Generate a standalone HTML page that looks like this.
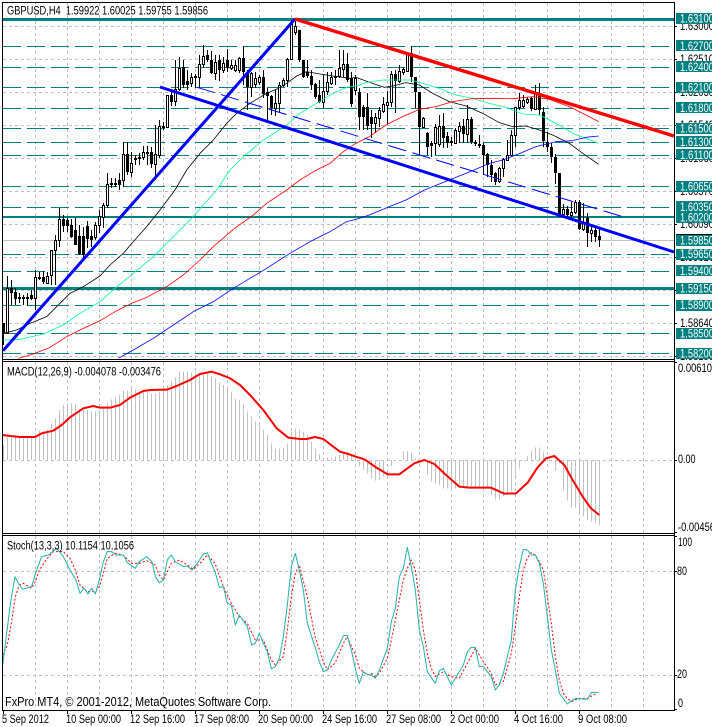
<!DOCTYPE html>
<html><head><meta charset="utf-8"><title>GBPUSD,H4</title>
<style>
html,body{margin:0;padding:0;background:#fff;width:712px;height:727px;overflow:hidden}
svg{display:block;position:absolute;left:0;top:0}
text{font-family:"Liberation Sans",sans-serif;font-size:11.5px;fill:#000}
.w{fill:#fff}
.ns *{vector-effect:non-scaling-stroke;fill:none}
</style></head><body>
<svg width="712" height="727" viewBox="0 0 712 727" xmlns="http://www.w3.org/2000/svg">
<rect width="712" height="727" fill="#fff"/>
<!-- vertical grid -->
<g stroke="#c0c0c0" stroke-dasharray="3 3" shape-rendering="crispEdges" fill="none">
<path d="M35.5 3V359M67.5 3V359M99.5 3V359M131.5 3V359M163.5 3V359M195.5 3V359M227.5 3V359M259.5 3V359M291.5 3V359M323.5 3V359M355.5 3V359M387.5 3V359M419.5 3V359M451.5 3V359M483.5 3V359M515.5 3V359M547.5 3V359M579.5 3V359M611.5 3V359M643.5 3V359"/>
<path d="M35.5 362V533M67.5 362V533M99.5 362V533M131.5 362V533M163.5 362V533M195.5 362V533M227.5 362V533M259.5 362V533M291.5 362V533M323.5 362V533M355.5 362V533M387.5 362V533M419.5 362V533M451.5 362V533M483.5 362V533M515.5 362V533M547.5 362V533M579.5 362V533M611.5 362V533M643.5 362V533"/>
<path d="M35.5 536V710M67.5 536V710M99.5 536V710M131.5 536V710M163.5 536V710M195.5 536V710M227.5 536V710M259.5 536V710M291.5 536V710M323.5 536V710M355.5 536V710M387.5 536V710M419.5 536V710M451.5 536V710M483.5 536V710M515.5 536V710M547.5 536V710M579.5 536V710M611.5 536V710M643.5 536V710"/>
<path d="M3 26.5H674M3 59.5H674M3 92.5H674M3 125.5H674M3 158.5H674M3 191.5H674M3 224.5H674M3 257.5H674M3 290.5H674M3 323.5H674M3 356.5H674M3 460.5H674M3 571.5H674M3 675.5H674"/>
</g>
<!-- levels -->
<g stroke="#008080" fill="none" shape-rendering="crispEdges">
<path stroke-dasharray="18 6" d="M3 46.5H674M3 67.5H674M3 87.5H674M3 108.5H674M3 128.5H674M3 142.5H674M3 155.5H674M3 186.5H674M3 207.5H674M3 254.5H674M3 271.5H674M3 305.5H674M3 333.5H674M3 353.5H674"/>
<path stroke-width="3" d="M3 19.5H674M3 288.5H674"/>
<path stroke-width="2" d="M3 217H674"/>
</g>
<path d="M3 240.5H674" stroke="#c0c0c0" shape-rendering="crispEdges"/>
<!-- candle wicks -->
<path stroke="#000" fill="none" shape-rendering="crispEdges" d="M3.5 323V345M7.5 276V333M11.5 280V305M15.5 288V305M19.5 293V303M23.5 295V305M27.5 293V306M31.5 290V300M35.5 270V310M39.5 272V280M43.5 271V284M47.5 272V284M51.5 250V285M55.5 235V285M59.5 208V247M63.5 215V232M67.5 218V232M71.5 219V238M75.5 218V245M79.5 225V255M83.5 227V258M87.5 221V248M91.5 230V247M95.5 222V240M99.5 210V233M103.5 203V228M107.5 173V208M111.5 178V188M115.5 178V187M119.5 173V190M123.5 142V187M127.5 142V175M131.5 152V177M135.5 155V165M139.5 153V165M143.5 146V160M147.5 146V165M151.5 147V168M155.5 125V180M159.5 120V158M163.5 122V130M167.5 95V128M171.5 92V106M175.5 60V106M179.5 57V91M183.5 60V88M187.5 70V90M191.5 73V87M195.5 74V88M199.5 55V88M203.5 45V68M207.5 50V62M211.5 51V74M215.5 55V80M219.5 55V81M223.5 57V73M227.5 49V72M231.5 60V70M235.5 60V72M239.5 57V73M243.5 46V85M247.5 70V110M251.5 72V97M255.5 72V88M259.5 75V85M263.5 70V98M267.5 88V120M271.5 95V115M275.5 90V116M279.5 82V113M283.5 78V87M287.5 58V87M291.5 20V60M295.5 20V35M299.5 30V62M303.5 60V78M307.5 60V78M311.5 70V90M315.5 83V99M319.5 80V103M323.5 75V108M327.5 72V95M331.5 72V85M335.5 70V85M339.5 50V78M343.5 50V77M347.5 53V82M351.5 72V107M355.5 75V95M359.5 88V130M363.5 105V130M367.5 93V130M371.5 110V138M375.5 113V133M379.5 107V127M383.5 97V113M387.5 91V124M391.5 71V107M395.5 70V113M399.5 65V83M403.5 67V75M407.5 52V72M411.5 46V82M415.5 77V108M419.5 92V155M423.5 117V128M427.5 132V155M431.5 141V157M435.5 124V155M439.5 115V147M443.5 113V148M447.5 132V148M451.5 137V146M455.5 128V144M459.5 122V143M463.5 119V143M467.5 105V143M471.5 117V144M475.5 140V146M479.5 135V148M483.5 143V175M487.5 153V177M491.5 160V182M495.5 172V185M499.5 167V183M503.5 158V177M507.5 140V161M511.5 130V157M515.5 107V147M519.5 93V110M523.5 95V108M527.5 97V104M531.5 97V111M535.5 85V110M539.5 83V115M543.5 107V147M547.5 132V152M551.5 143V163M555.5 154V184M559.5 173V217M563.5 204V218M567.5 206V218M571.5 202V218M575.5 200V214M579.5 200V230M583.5 203V231M587.5 213V247M591.5 227V242M595.5 227V242M599.5 228V247"/>
<!-- black bodies -->
<path fill="#000" shape-rendering="crispEdges" d="M2 323h3V333h-3zM10 288h3V293h-3zM14 292h3V299h-3zM18 297h3V299h-3zM22 297h3V299h-3zM26 297h3V299h-3zM30 295h3V299h-3zM38 277h3V279h-3zM42 277h3V282h-3zM62 219h3V226h-3zM66 220h3V226h-3zM70 225h3V237h-3zM74 230h3V245h-3zM78 236h3V254h-3zM82 236h3V255h-3zM86 226h3V239h-3zM90 236h3V240h-3zM110 183h3V185h-3zM114 183h3V185h-3zM118 180h3V185h-3zM126 154h3V172h-3zM134 158h3V160h-3zM138 157h3V159h-3zM146 152h3V154h-3zM150 152h3V164h-3zM162 126h3V128h-3zM170 95h3V102h-3zM182 67h3V85h-3zM186 81h3V85h-3zM194 76h3V78h-3zM206 55h3V60h-3zM210 60h3V73h-3zM218 60h3V70h-3zM226 60h3V68h-3zM242 58h3V72h-3zM246 72h3V87h-3zM262 77h3V94h-3zM266 92h3V96h-3zM270 96h3V108h-3zM298 30h3V60h-3zM302 60h3V77h-3zM306 72h3V76h-3zM310 76h3V85h-3zM314 84h3V97h-3zM318 95h3V102h-3zM334 76h3V78h-3zM346 64h3V80h-3zM350 78h3V104h-3zM358 92h3V117h-3zM362 107h3V117h-3zM366 107h3V126h-3zM370 117h3V124h-3zM394 74h3V81h-3zM410 53h3V77h-3zM414 77h3V92h-3zM418 92h3V127h-3zM426 133h3V147h-3zM430 143h3V146h-3zM442 126h3V138h-3zM446 136h3V143h-3zM450 141h3V143h-3zM462 126h3V134h-3zM470 119h3V142h-3zM474 142h3V144h-3zM478 144h3V146h-3zM482 145h3V155h-3zM486 154h3V165h-3zM490 165h3V175h-3zM494 173h3V182h-3zM530 98h3V109h-3zM538 93h3V110h-3zM542 112h3V141h-3zM546 142h3V147h-3zM550 147h3V157h-3zM554 157h3V173h-3zM558 173h3V217h-3zM566 209h3V215h-3zM578 202h3V229h-3zM586 218h3V233h-3zM594 230h3V237h-3zM598 236h3V240h-3z"/>
<!-- white bodies -->
<path fill="#fff" stroke="#000" shape-rendering="crispEdges" d="M6.5 288.5h2V333.5h-2zM34.5 277.5h2V298.5h-2zM46.5 276.5h2V283.5h-2zM50.5 250.5h2V275.5h-2zM54.5 240.5h2V250.5h-2zM58.5 219.5h2V240.5h-2zM94.5 225.5h2V237.5h-2zM98.5 216.5h2V225.5h-2zM102.5 205.5h2V217.5h-2zM106.5 184.5h2V205.5h-2zM122.5 154.5h2V180.5h-2zM130.5 163.5h2V172.5h-2zM142.5 152.5h2V157.5h-2zM154.5 154.5h2V164.5h-2zM158.5 126.5h2V155.5h-2zM166.5 95.5h2V127.5h-2zM174.5 89.5h2V101.5h-2zM178.5 68.5h2V89.5h-2zM190.5 77.5h2V83.5h-2zM198.5 64.5h2V77.5h-2zM202.5 56.5h2V64.5h-2zM214.5 62.5h2V73.5h-2zM222.5 63.5h2V70.5h-2zM230.5 65.5h2V68.5h-2zM234.5 65.5h2V70.5h-2zM238.5 58.5h2V70.5h-2zM250.5 73.5h2V87.5h-2zM254.5 78.5h2V84.5h-2zM258.5 77.5h2V82.5h-2zM274.5 103.5h2V108.5h-2zM278.5 85.5h2V103.5h-2zM282.5 80.5h2V85.5h-2zM286.5 59.5h2V80.5h-2zM290.5 24.5h2V59.5h-2zM294.5 26.5h2V32.5h-2zM322.5 91.5h2V102.5h-2zM326.5 82.5h2V91.5h-2zM330.5 77.5h2V83.5h-2zM338.5 68.5h2V76.5h-2zM342.5 64.5h2V69.5h-2zM354.5 78.5h2V90.5h-2zM374.5 117.5h2V123.5h-2zM378.5 110.5h2V118.5h-2zM382.5 104.5h2V111.5h-2zM386.5 102.5h2V105.5h-2zM390.5 74.5h2V102.5h-2zM398.5 71.5h2V81.5h-2zM402.5 69.5h2V72.5h-2zM406.5 53.5h2V71.5h-2zM422.5 118.5h2V127.5h-2zM434.5 127.5h2V143.5h-2zM438.5 126.5h2V144.5h-2zM454.5 130.5h2V143.5h-2zM458.5 126.5h2V131.5h-2zM466.5 119.5h2V134.5h-2zM498.5 168.5h2V181.5h-2zM502.5 159.5h2V168.5h-2zM506.5 155.5h2V160.5h-2zM510.5 135.5h2V155.5h-2zM514.5 107.5h2V135.5h-2zM518.5 100.5h2V107.5h-2zM522.5 100.5h2V106.5h-2zM526.5 99.5h2V102.5h-2zM534.5 93.5h2V109.5h-2zM562.5 209.5h2V214.5h-2zM570.5 212.5h2V215.5h-2zM574.5 202.5h2V212.5h-2zM582.5 222.5h2V229.5h-2zM590.5 230.5h2V233.5h-2z"/>
<!-- moving averages, coords in 3x crop units -->
<g class="ns" stroke-width=".8" stroke-linejoin="round">
<g transform="scale(.33333)">
<g transform="translate(0,570)">
<polyline stroke="#000" points="10,430 50,420 90,400 140,380 180,340 210,310 250,290 300,258 330,225 370,190 400,155 440,110 480,60 525,0"/>
<polyline stroke="#00fa9a" points="10,450 60,448 130,432 190,405 240,370 300,335 345,295 400,250 460,200 510,150 570,90 610,45 650,0"/>
<polyline stroke="#f00" points="55,505 100,492 150,472 200,440 240,420 300,392 345,365 395,340 440,322 500,290 550,255 600,210 640,170 700,118 760,75 800,40 860,0"/>
<polyline stroke="#00f" points="355,505 400,480 460,445 520,405 580,365 640,335 700,295 750,265 800,235 870,190 930,155 990,125 1040,95 1068,88 1108,75 1168,50 1218,30 1273,0"/>
</g>
<polyline stroke="#000" points="525,570 560,510 600,460 640,420 680,370 710,340 750,310 800,280 835,265 860,250 890,228 920,215 960,222 1000,228 1050,235 1068,232 1118,250 1153,262 1178,258 1218,248 1258,255 1298,280 1348,305 1398,318 1448,340 1498,368 1538,380 1578,378 1618,390 1658,405 1708,430 1748,460 1796,493"/>
<polyline stroke="#00fa9a" points="650,570 690,510 730,470 790,420 830,395 860,375 900,340 950,310 1000,280 1040,262 1068,258 1098,248 1148,240 1208,240 1233,240 1268,250 1318,265 1368,285 1418,295 1468,310 1518,322 1568,342 1618,345 1668,370 1718,400 1758,415 1796,430"/>
<polyline stroke="#f00" points="860,570 900,540 940,515 990,490 1030,455 1068,430 1108,410 1158,375 1208,350 1258,328 1308,320 1358,305 1418,296 1478,295 1538,296 1598,290 1648,298 1708,320 1748,340 1796,365"/>
<polyline stroke="#00f" points="1273,570 1348,540 1418,512 1468,490 1508,480 1548,465 1608,440 1668,425 1718,422 1758,412 1796,408"/>
</g>
</g>
<!-- channel + trendlines -->
<path d="M197 87.3L622.7 216.7" stroke="#00f" stroke-width="1" stroke-dasharray="18.5 6.5" fill="none"/>
<path d="M3 350.7L295 19" stroke="#00f" stroke-width="3" fill="none"/>
<path d="M160 87L674 252" stroke="#00f" stroke-width="3" fill="none"/>
<path d="M295 19L674 136" stroke="#f00" stroke-width="3.4" fill="none"/>
<!-- MACD histogram -->
<g class="ns" transform="translate(0,360) scale(.33333)">
<path stroke="#c0c0c0" shape-rendering="crispEdges" d="M10.5 300V255M22.5 300V232M34.5 300V232M46.5 300V228M58.5 300V230M70.5 300V230M82.5 300V230M94.5 300V232M106.5 300V232M118.5 300V212M130.5 300V212M142.5 300V208M154.5 300V190M166.5 300V175M178.5 300V150M190.5 300V135M202.5 300V130M214.5 300V130M226.5 300V132M238.5 300V148M250.5 300V150M262.5 300V148M274.5 300V155M286.5 300V155M298.5 300V152M310.5 300V145M322.5 300V130M334.5 300V118M346.5 300V112M358.5 300V105M370.5 300V92M382.5 300V92M394.5 300V85M406.5 300V88M418.5 300V92M430.5 300V95M442.5 300V95M454.5 300V100M466.5 300V100M478.5 300V95M490.5 300V82M502.5 300V75M514.5 300V65M526.5 300V52M538.5 300V35M550.5 300V35M562.5 300V35M574.5 300V38M586.5 300V40M598.5 300V42M610.5 300V42M622.5 300V42M634.5 300V48M646.5 300V55M658.5 300V68M670.5 300V75M682.5 300V85M694.5 300V98M706.5 300V115M718.5 300V120M730.5 300V130M742.5 300V155M754.5 300V170M766.5 300V185M778.5 300V190M790.5 300V210M802.5 300V225M814.5 300V250M826.5 300V265M838.5 300V265M850.5 300V265M862.5 300V250M874.5 300V215M886.5 300V205M898.5 300V208M910.5 300V215M922.5 300V225M934.5 300V245M946.5 300V265M958.5 300V282M982.5 300V292M994.5 300V292M1006.5 300V290M1018.5 300V285M1030.5 300V280M1042.5 300V275M1054.5 300V285M1066.5 300V290M1078.5 300V320M1090.5 300V330M1102.5 300V340M1114.5 300V355M1126.5 300V362M1138.5 300V360M1150.5 300V350M1174.5 300V318M1210.5 300V275M1222.5 300V273M1234.5 300V280M1246.5 300V296M1282.5 300V345M1294.5 300V365M1306.5 300V370M1318.5 300V375M1330.5 300V385M1342.5 300V385M1354.5 300V390M1366.5 300V385M1378.5 300V380M1390.5 300V383M1402.5 300V383M1414.5 300V385M1426.5 300V385M1438.5 300V385M1450.5 300V385M1462.5 300V385M1474.5 300V405M1486.5 300V418M1498.5 300V418M1510.5 300V410M1522.5 300V405M1534.5 300V395M1546.5 300V355M1558.5 300V325M1582.5 300V288M1594.5 300V272M1606.5 300V263M1618.5 300V262M1630.5 300V278M1642.5 300V290M1666.5 300V332M1678.5 300V310M1690.5 300V392M1702.5 300V422M1714.5 300V442M1726.5 300V442M1738.5 300V465M1750.5 300V470M1762.5 300V478M1774.5 300V485M1786.5 300V488M1798.5 300V495"/>
<polyline stroke="#f00" stroke-width="2" stroke-linejoin="round" points="8,225 30,228 60,231 105,231 125,220 160,212 185,195 210,172 250,145 280,138 300,143 330,143 360,135 390,113 430,93 450,90 500,89 530,78 570,60 600,42 635,35 660,43 690,55 720,75 750,105 790,150 830,205 865,233 900,237 920,237 945,231 970,237 1000,260 1020,275 1045,282 1068,290 1093,298 1128,322 1163,343 1198,343 1243,310 1273,300 1303,312 1338,345 1378,380 1408,383 1473,383 1513,401 1548,400 1583,368 1613,322 1638,295 1663,288 1693,315 1718,360 1748,410 1773,445 1798,465"/>
</g>
<!-- Stochastic -->
<g class="ns" transform="translate(0,530) scale(.33333)" stroke-linejoin="round">
<polyline stroke="#f00" stroke-dasharray="2 2" points="8,375 22,345 34,280 46,200 58,165 70,160 94,175 106,155 118,120 142,85 160,65 190,65 210,85 226,120 240,165 262,185 286,185 298,170 310,130 322,85 345,70 370,75 394,100 418,100 440,92 466,105 478,135 490,150 502,125 514,100 538,90 562,105 580,118 600,100 622,75 645,100 670,170 694,220 718,260 742,280 766,330 790,330 814,390 826,405 850,380 862,300 874,200 886,130 898,105 922,200 945,320 970,395 982,420 1005,400 1030,340 1042,320 1068,380 1078,415 1102,435 1114,430 1126,440 1138,430 1162,385 1174,330 1186,270 1198,210 1210,150 1222,115 1234,90 1246,120 1258,210 1270,300 1282,370 1294,415 1306,440 1330,425 1354,440 1378,445 1402,400 1426,355 1450,395 1474,430 1486,465 1510,455 1534,370 1546,290 1558,200 1570,120 1582,85 1594,68 1606,75 1618,95 1630,120 1642,200 1654,280 1666,380 1678,450 1690,490 1702,505 1714,515 1738,505 1762,505 1786,492"/>
<polyline stroke="#20b2aa" stroke-width="1" points="8,405 20,310 32,215 45,140 55,160 68,178 95,170 108,125 125,80 145,75 170,55 190,80 210,120 228,150 240,190 252,175 264,192 275,175 286,192 298,150 310,95 322,65 335,65 348,75 370,75 382,98 406,115 418,95 440,80 456,95 466,140 478,158 490,150 502,90 514,75 526,95 550,110 562,108 576,120 592,100 610,72 622,68 634,100 645,125 658,172 670,170 682,220 694,225 706,285 718,255 742,290 755,345 766,340 778,310 790,340 802,365 814,417 826,410 838,385 850,320 862,225 874,110 886,70 898,120 910,180 922,280 945,350 958,395 970,425 982,420 994,390 1018,345 1030,317 1042,317 1054,360 1068,425 1078,460 1090,425 1102,433 1114,435 1126,445 1138,420 1162,355 1174,275 1186,235 1198,140 1210,115 1222,52 1234,110 1246,180 1258,300 1270,350 1282,425 1306,460 1318,422 1330,415 1354,465 1378,425 1390,405 1402,365 1414,352 1426,352 1438,410 1450,410 1474,440 1486,480 1498,465 1510,430 1534,330 1546,180 1558,110 1570,58 1582,60 1594,75 1606,75 1618,100 1630,160 1642,260 1654,360 1666,420 1678,490 1702,522 1718,510 1728,505 1762,508 1774,487 1796,487"/>
</g>
<!-- frames -->
<g fill="none" stroke="#000" shape-rendering="crispEdges">
<path d="M2.5 2.5H674.5V710.5H2.5Z"/>
<path d="M2 359.5H675M2 361.5H675M2 533.5H675M2 535.5H675"/>
<path d="M674 26.5h3M674 59.5h3M674 92.5h3M674 125.5h3M674 158.5h3M674 191.5h3M674 224.5h3M674 257.5h3M674 290.5h3M674 323.5h3M674 356.5h3M674 362.5h3M674 460.5h3M674 532.5h3M674 536.5h3M674 571.5h3M674 675.5h3M674 709.5h3"/>
<path d="M3.5 710V714M67.5 710V714M131.5 710V714M195.5 710V714M259.5 710V714M323.5 710V714M387.5 710V714M451.5 710V714M515.5 710V714M579.5 710V714"/>
<path d="M676 234.5H712"/>
</g>
<!-- axis price labels -->
<g lengthAdjust="spacingAndGlyphs">
<text x="680" y="30" textLength="34" lengthAdjust="spacingAndGlyphs">1.63000</text><text x="680" y="63" textLength="34" lengthAdjust="spacingAndGlyphs">1.62510</text><text x="680" y="96" textLength="34" lengthAdjust="spacingAndGlyphs">1.62030</text><text x="680" y="129" textLength="34" lengthAdjust="spacingAndGlyphs">1.61540</text><text x="680" y="162" textLength="34" lengthAdjust="spacingAndGlyphs">1.61060</text><text x="680" y="195" textLength="34" lengthAdjust="spacingAndGlyphs">1.60570</text><text x="680" y="228" textLength="34" lengthAdjust="spacingAndGlyphs">1.60090</text><text x="680" y="261" textLength="34" lengthAdjust="spacingAndGlyphs">1.59610</text><text x="680" y="294" textLength="34" lengthAdjust="spacingAndGlyphs">1.59120</text><text x="680" y="327" textLength="34" lengthAdjust="spacingAndGlyphs">1.58640</text><text x="680" y="360" textLength="34" lengthAdjust="spacingAndGlyphs">1.58150</text>
</g>
<!-- teal level labels -->
<g fill="#008080" shape-rendering="crispEdges">
<path d="M676 13h36v11h-36zM676 40h36v11h-36zM676 61h36v11h-36zM676 82h36v11h-36zM676 102h36v11h-36zM676 123h36v11h-36zM676 136h36v11h-36zM676 149h36v11h-36zM676 181h36v11h-36zM676 201h36v11h-36zM676 212h36v11h-36zM676 235h36v11h-36zM676 249h36v11h-36zM676 265h36v11h-36zM676 283h36v11h-36zM676 300h36v11h-36zM676 328h36v11h-36zM676 348h36v11h-36z"/>
</g>
<g>
<text class="w" x="680" y="22.5" textLength="34" lengthAdjust="spacingAndGlyphs">1.63100</text><text class="w" x="680" y="50" textLength="34" lengthAdjust="spacingAndGlyphs">1.62700</text><text class="w" x="680" y="71" textLength="34" lengthAdjust="spacingAndGlyphs">1.62400</text><text class="w" x="680" y="91.5" textLength="34" lengthAdjust="spacingAndGlyphs">1.62100</text><text class="w" x="680" y="112" textLength="34" lengthAdjust="spacingAndGlyphs">1.61800</text><text class="w" x="680" y="132.5" textLength="34" lengthAdjust="spacingAndGlyphs">1.61500</text><text class="w" x="680" y="146" textLength="34" lengthAdjust="spacingAndGlyphs">1.61300</text><text class="w" x="680" y="159" textLength="34" lengthAdjust="spacingAndGlyphs">1.61100</text><text class="w" x="680" y="190.5" textLength="34" lengthAdjust="spacingAndGlyphs">1.60650</text><text class="w" x="680" y="211" textLength="34" lengthAdjust="spacingAndGlyphs">1.60350</text><text class="w" x="680" y="221.5" textLength="34" lengthAdjust="spacingAndGlyphs">1.60200</text><text class="w" x="680" y="244.5" textLength="34" lengthAdjust="spacingAndGlyphs">1.59850</text><text class="w" x="680" y="258" textLength="34" lengthAdjust="spacingAndGlyphs">1.59650</text><text class="w" x="680" y="275" textLength="34" lengthAdjust="spacingAndGlyphs">1.59400</text><text class="w" x="680" y="292.5" textLength="34" lengthAdjust="spacingAndGlyphs">1.59150</text><text class="w" x="680" y="309" textLength="34" lengthAdjust="spacingAndGlyphs">1.58900</text><text class="w" x="680" y="337.5" textLength="34" lengthAdjust="spacingAndGlyphs">1.58500</text><text class="w" x="680" y="357.5" textLength="34" lengthAdjust="spacingAndGlyphs">1.58200</text>
<text x="678" y="372" textLength="34" lengthAdjust="spacingAndGlyphs">0.00610</text><text x="678" y="463" textLength="17.5" lengthAdjust="spacingAndGlyphs">0.00</text><text x="678" y="531" textLength="37" lengthAdjust="spacingAndGlyphs">-0.00456</text>
<text x="678" y="546" textLength="14" lengthAdjust="spacingAndGlyphs">100</text><text x="677" y="575" textLength="10" lengthAdjust="spacingAndGlyphs">80</text><text x="677" y="678" textLength="10" lengthAdjust="spacingAndGlyphs">20</text><text x="678" y="707" textLength="5" lengthAdjust="spacingAndGlyphs">0</text>
</g>
<!-- labels -->
<text x="7" y="14.5" textLength="201" lengthAdjust="spacingAndGlyphs">GBPUSD,H4&#160; 1.59922 1.60025 1.59755 1.59856</text>
<text x="7" y="375.5" textLength="154" lengthAdjust="spacingAndGlyphs">MACD(12,26,9) -0.004078 -0.003476</text>
<text x="7" y="549.5" textLength="127" lengthAdjust="spacingAndGlyphs">Stoch(13,3,3) 10.1154 10.1056</text>
<text x="5" y="706" style="font-size:13px" textLength="266" lengthAdjust="spacingAndGlyphs">FxPro MT4, © 2001-2012, MetaQuotes Software Corp.</text>
<g>
<text x="2" y="723" textLength="47" lengthAdjust="spacingAndGlyphs">5 Sep 2012</text>
<text x="66" y="723" textLength="55" lengthAdjust="spacingAndGlyphs">10 Sep 00:00</text>
<text x="130" y="723" textLength="55" lengthAdjust="spacingAndGlyphs">12 Sep 16:00</text>
<text x="194" y="723" textLength="55" lengthAdjust="spacingAndGlyphs">17 Sep 08:00</text>
<text x="258" y="723" textLength="55" lengthAdjust="spacingAndGlyphs">20 Sep 00:00</text>
<text x="322" y="723" textLength="55" lengthAdjust="spacingAndGlyphs">24 Sep 16:00</text>
<text x="386" y="723" textLength="55" lengthAdjust="spacingAndGlyphs">27 Sep 08:00</text>
<text x="450" y="723" textLength="49" lengthAdjust="spacingAndGlyphs">2 Oct 00:00</text>
<text x="514" y="723" textLength="49" lengthAdjust="spacingAndGlyphs">4 Oct 16:00</text>
<text x="578" y="723" textLength="49" lengthAdjust="spacingAndGlyphs">9 Oct 08:00</text>
</g>
</svg>
</body></html>
